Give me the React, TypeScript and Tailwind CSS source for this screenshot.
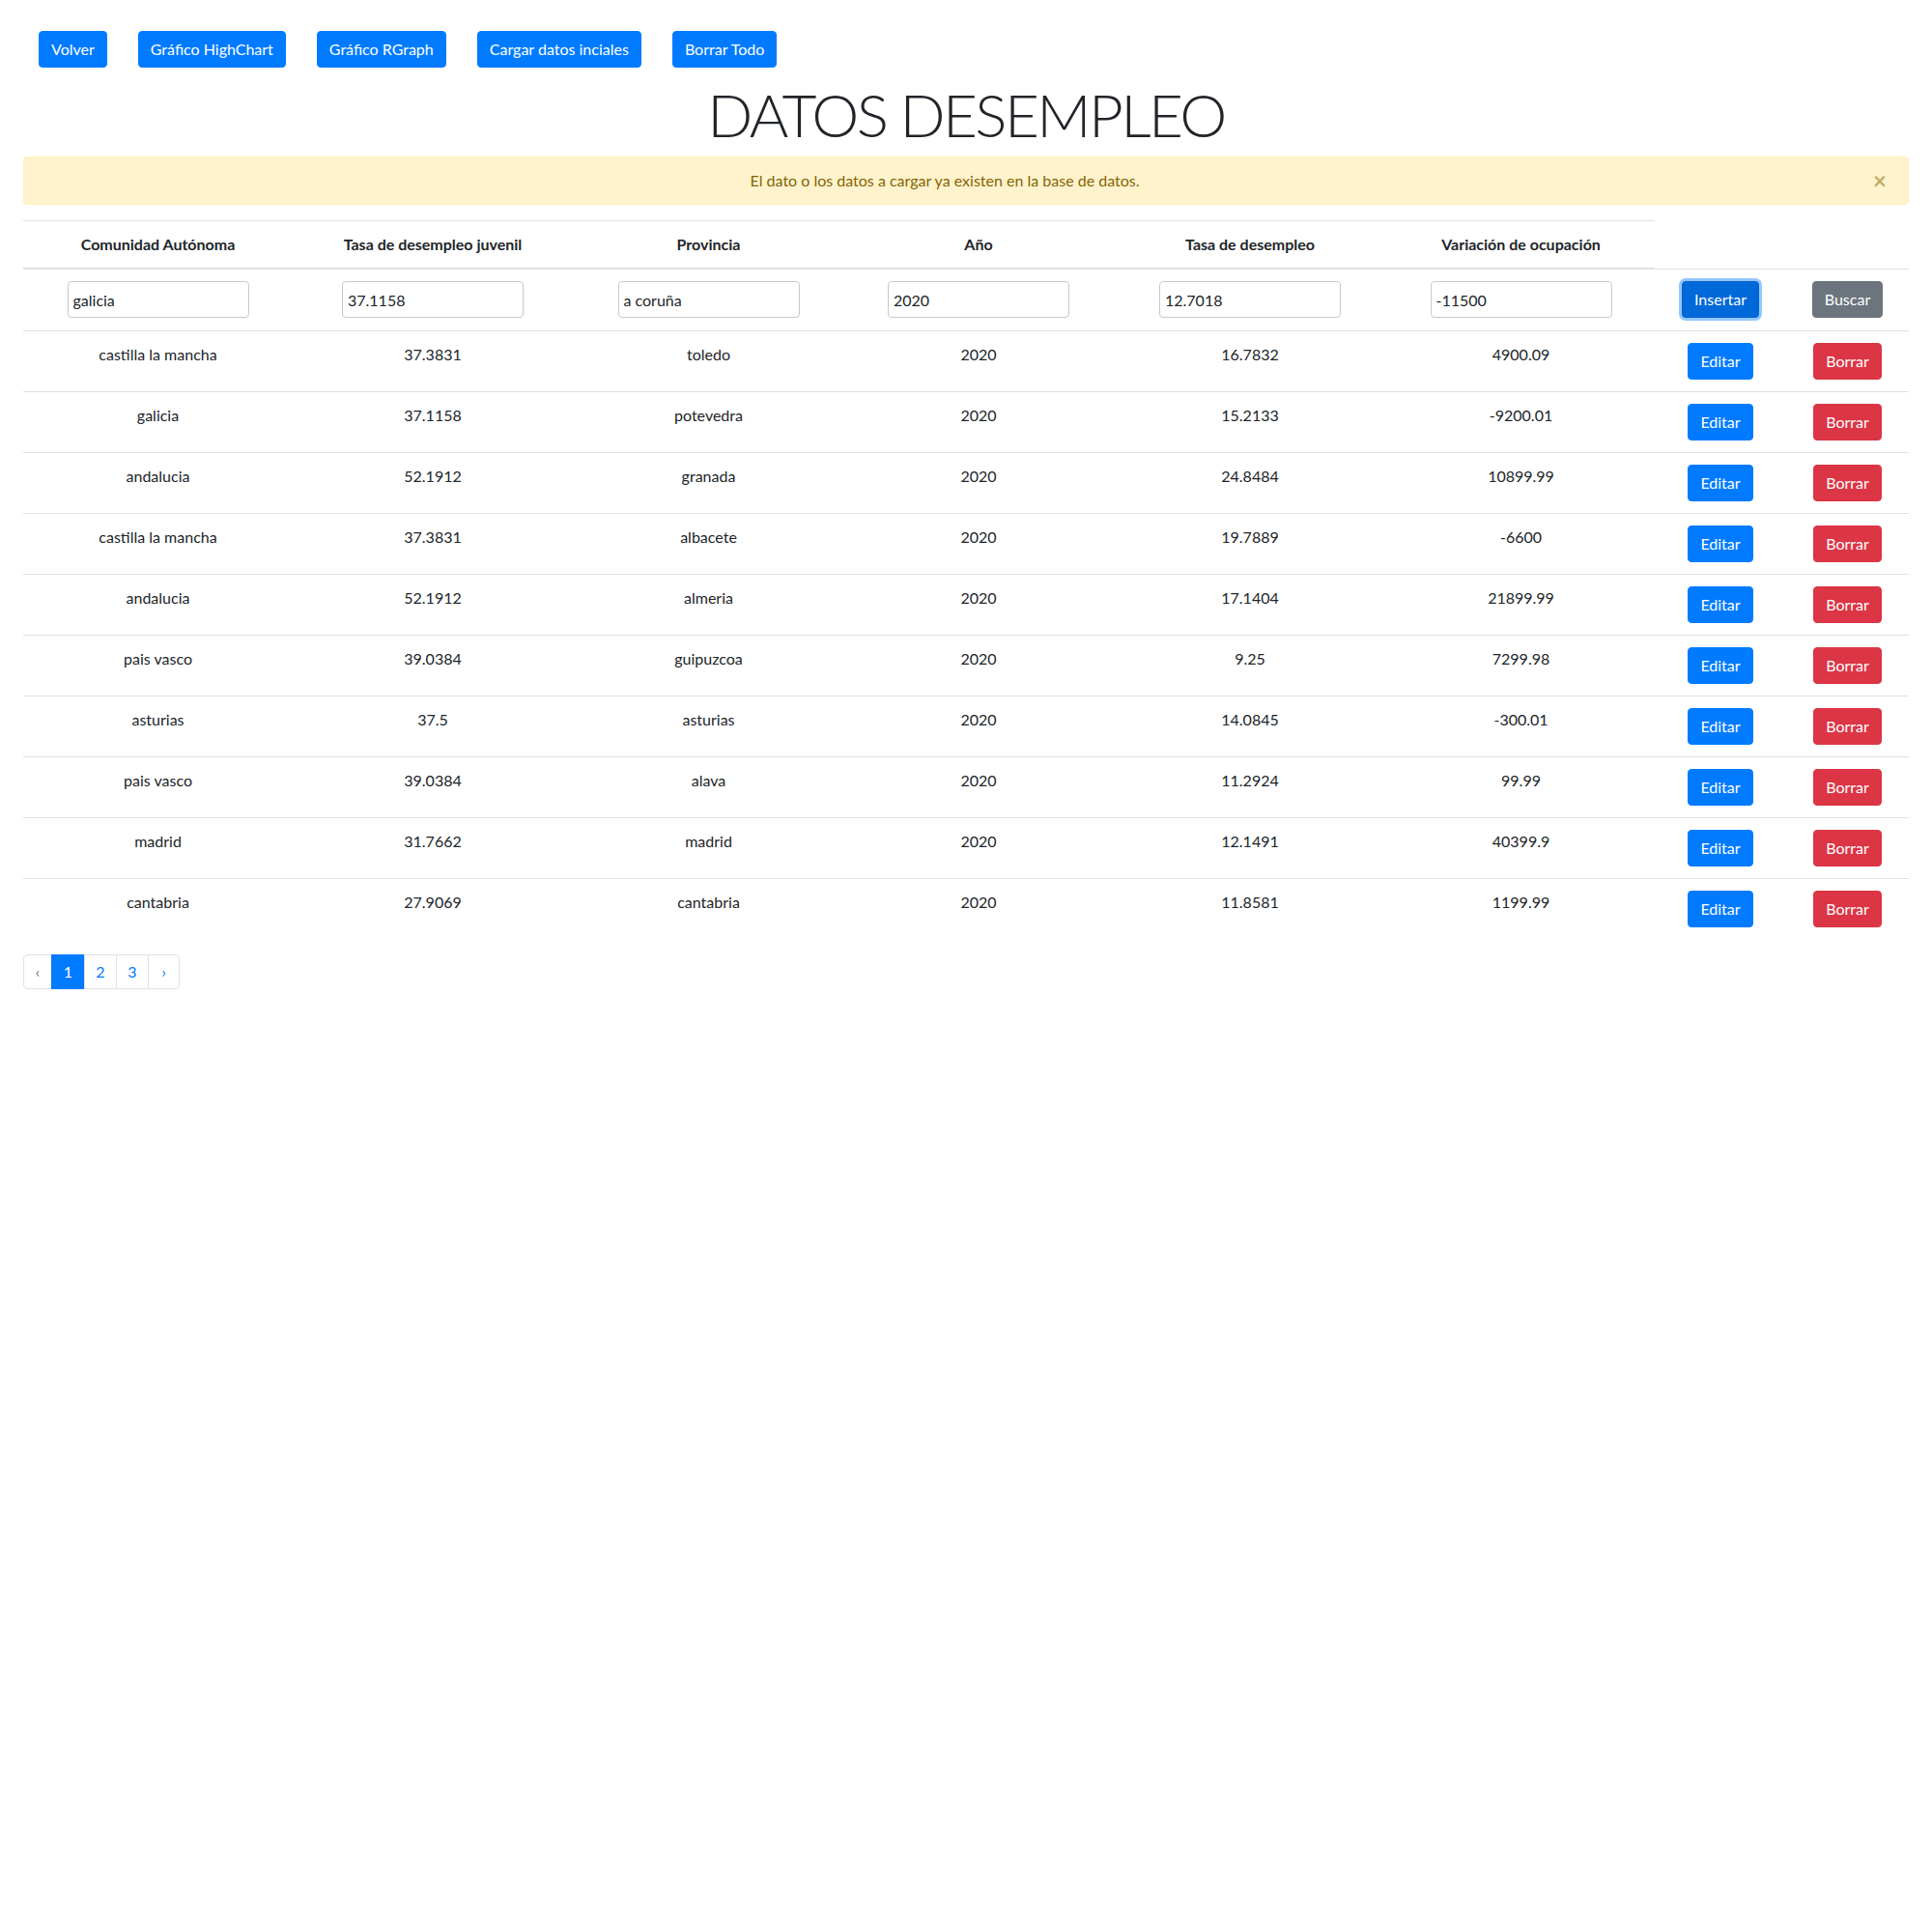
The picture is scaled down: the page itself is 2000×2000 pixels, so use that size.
import React from "react";

const ROWS = [
  ["castilla la mancha", "37.3831", "toledo", "2020", "16.7832", "4900.09"],
  ["galicia", "37.1158", "potevedra", "2020", "15.2133", "-9200.01"],
  ["andalucia", "52.1912", "granada", "2020", "24.8484", "10899.99"],
  ["castilla la mancha", "37.3831", "albacete", "2020", "19.7889", "-6600"],
  ["andalucia", "52.1912", "almeria", "2020", "17.1404", "21899.99"],
  ["pais vasco", "39.0384", "guipuzcoa", "2020", "9.25", "7299.98"],
  ["asturias", "37.5", "asturias", "2020", "14.0845", "-300.01"],
  ["pais vasco", "39.0384", "alava", "2020", "11.2924", "99.99"],
  ["madrid", "31.7662", "madrid", "2020", "12.1491", "40399.9"],
  ["cantabria", "27.9069", "cantabria", "2020", "11.8581", "1199.99"],
];

const HEADERS = [
  "Comunidad Autónoma",
  "Tasa de desempleo juvenil",
  "Provincia",
  "Año",
  "Tasa de desempleo",
  "Variación de ocupación",
];

// column widths measured off the page
const COLS = ["w-[279px]", "w-[290px]", "w-[281px]", "w-[278px]", "w-[284px]", "w-[277px]", "w-[136px]", "w-[127px]"];

const FORM = ["galicia", "37.1158", "a coruña", "2020", "12.7018", "-11500"];

const TOP_BUTTONS = ["Volver", "Gráfico HighChart", "Gráfico RGraph", "Cargar datos inciales", "Borrar Todo"];

export default function App() {
  return (
    <div className="px-6 font-['Lato','Liberation_Sans',sans-serif] text-base leading-6 text-[#212529] bg-white">
      <div className="flex pt-8">
        {TOP_BUTTONS.map((label) => (
          <button
            key={label}
            className="mx-4 h-[38px] px-3 rounded bg-[#007bff] border border-[#007bff] text-white"
          >
            {label}
          </button>
        ))}
      </div>

      <h1 className="mt-[10px] mb-[6px] text-center text-[62px] leading-[76px] font-light tracking-[-2.6px]">
        DATOS DESEMPLEO
      </h1>

      <div className="flex items-center h-[50px] mb-4 pl-5 rounded border border-[#ffeeba] bg-[#fff3cd] text-[#856404]">
        <p className="flex-1 text-center">El dato o los datos a cargar ya existen en la base de datos.</p>
        <button className="w-16 pr-[22px] text-right text-2xl leading-none font-bold text-[#c2ab68]" aria-label="Close">
          ×
        </button>
      </div>

      <table className="w-full table-fixed border-collapse mb-4">
        <colgroup>
          {COLS.map((c) => (
            <col key={c} className={c} />
          ))}
        </colgroup>
        <thead>
          <tr>
            {HEADERS.map((h) => (
              <th key={h} className="p-3 font-bold text-center border-t border-b-2 border-[#dee2e6]">
                {h}
              </th>
            ))}
          </tr>
        </thead>
        <tbody>
          <tr>
            {FORM.map((v, i) => (
              <td key={i} className="px-3 pt-3 pb-[13px] border-t border-[#dee2e6] text-center">
                <input
                  defaultValue={v}
                  className="w-[188px] h-[38px] px-[5px] border border-[#c6c9cc] rounded-sm text-[#212529] bg-white"
                />
              </td>
            ))}
            <td className="px-3 pt-3 pb-[13px] border-t border-[#dee2e6] text-center">
              <button className="h-[38px] px-3 rounded bg-[#0069d9] border border-[#0062cc] text-white shadow-[0_0_0_3px_rgba(38,143,255,0.5)]">
                Insertar
              </button>
            </td>
            <td className="px-3 pt-3 pb-[13px] border-t border-[#dee2e6] text-center">
              <button className="h-[38px] px-3 rounded bg-[#6c757d] border border-[#6c757d] text-white">Buscar</button>
            </td>
          </tr>
          {ROWS.map((row, r) => (
            <tr key={r}>
              {row.map((v, i) => (
                <td key={i} className="p-3 align-top border-t border-[#dee2e6] text-center">
                  {v}
                </td>
              ))}
              <td className="p-3 border-t border-[#dee2e6] text-center">
                <button className="h-[38px] px-3 rounded bg-[#007bff] border border-[#007bff] text-white">Editar</button>
              </td>
              <td className="p-3 border-t border-[#dee2e6] text-center">
                <button className="h-[38px] px-3 rounded bg-[#dc3545] border border-[#dc3545] text-white">Borrar</button>
              </td>
            </tr>
          ))}
        </tbody>
      </table>

      <nav className="flex">
        <span className="h-9 w-[30px] flex items-center justify-center border border-[#dee2e6] rounded-l text-[#6c757d] leading-5">
          ‹
        </span>
        <span className="h-9 w-[35px] flex items-center justify-center border border-[#007bff] bg-[#007bff] text-white leading-5 -ml-px">
          1
        </span>
        <span className="h-9 w-[34px] flex items-center justify-center border border-[#dee2e6] text-[#007bff] leading-5 -ml-px">
          2
        </span>
        <span className="h-9 w-[34px] flex items-center justify-center border border-[#dee2e6] text-[#007bff] leading-5 -ml-px">
          3
        </span>
        <span className="h-9 w-[33px] flex items-center justify-center border border-[#dee2e6] rounded-r text-[#007bff] leading-5 -ml-px">
          ›
        </span>
      </nav>
    </div>
  );
}
